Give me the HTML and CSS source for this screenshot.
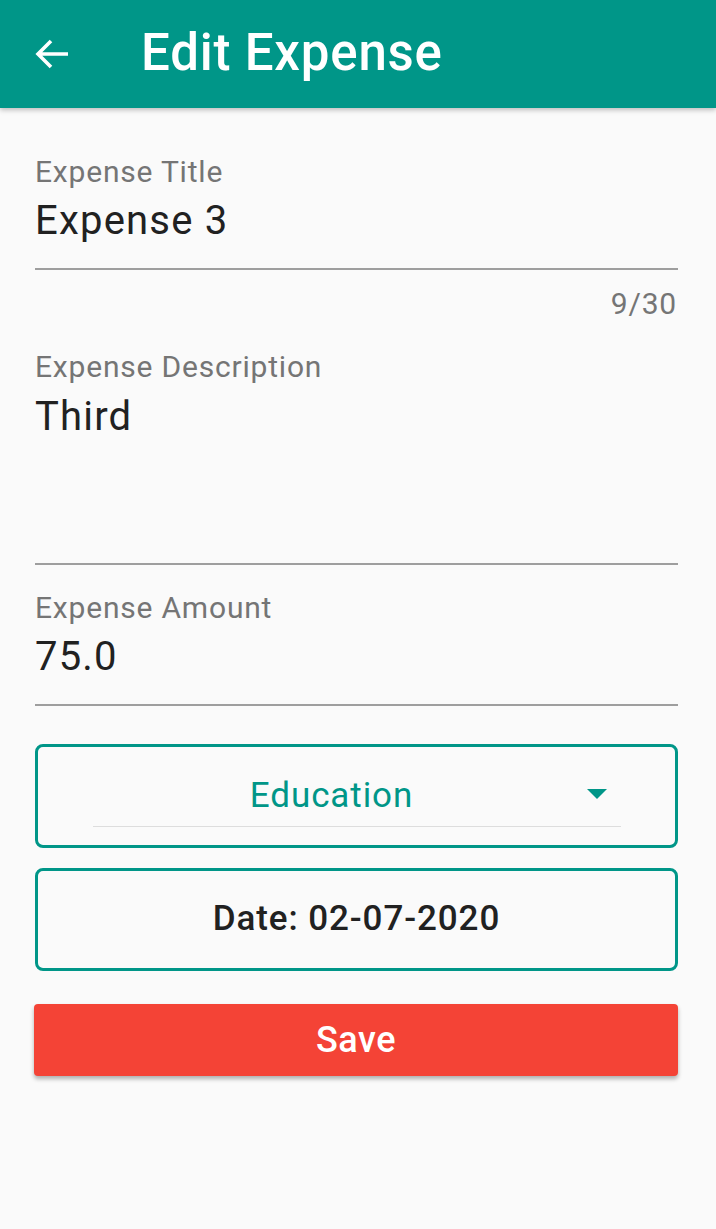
FILE: index.html
```html
<!DOCTYPE html>
<html>
<head>
<meta charset="utf-8">
<link rel="stylesheet" href="styles.css">
</head>
<body>
<header class="appbar">
  <svg class="back" width="36" height="36" viewBox="0 0 36 36"><path d="M34 18H4M17 5L4 18l13 13" fill="none" stroke="#fff" stroke-width="3.6" stroke-linecap="butt" stroke-linejoin="miter"/></svg>
  <h1 class="title">Edit Expense</h1>
</header>
<main class="content">
  <div class="field f-title">
    <div class="label">Expense Title</div>
    <div class="value">Expense 3</div>
  </div>
  <div class="counter">9/30</div>
  <div class="field f-desc">
    <div class="label">Expense Description</div>
    <div class="value">Third</div>
  </div>
  <div class="field f-amount">
    <div class="label">Expense Amount</div>
    <div class="value">75.0</div>
  </div>
  <div class="box dropdown">
    <div class="dd-inner">
      <span class="dd-text">Education</span>
      <svg class="dd-arrow" width="20" height="10" viewBox="0 0 20 10"><path d="M0 0h20L10 10z" fill="#009688"/></svg>
    </div>
  </div>
  <div class="box date">Date: 02-07-2020</div>
  <button class="save">Save</button>
</main>
</body>
</html>
```
FILE: styles.css
```css
* { box-sizing: border-box; }
html, body { margin: 0; padding: 0; }
body {
  width: 716px;
  height: 1229px;
  background: #fafafa;
  font-family: Roboto, "Noto Sans", sans-serif;
  overflow: hidden;
}
.appbar {
  height: 108px;
  background: #009688;
  display: flex;
  align-items: center;
  padding-left: 34px;
  box-shadow: 0 2px 5px rgba(0,0,0,0.25);
  position: relative;
}
.back { display: block; }
.title {
  margin: 0 0 0 71px;
  color: #fff;
  font-weight: 500;
  font-size: 51px;
  letter-spacing: 0.8px;
  line-height: 1;
  padding-bottom: 4px;
}
.content {
  padding: 0 38px 0 35px;
  display: flex;
  flex-direction: column;
}
.field {
  border-bottom: 2px solid #9e9e9e;
}
.label {
  color: #757575;
  font-size: 30px;
  letter-spacing: 0.8px;
  line-height: 34px;
  white-space: nowrap;
}
.value {
  color: #212121;
  font-size: 40px;
  letter-spacing: 1.2px;
  line-height: 46px;
  margin-top: 9px;
}
.f-title { padding-top: 47px; padding-bottom: 24px; }
.counter {
  text-align: right;
  color: #757575;
  font-size: 30px;
  letter-spacing: 0.8px;
  line-height: 34px;
  padding-top: 17px;
  margin-bottom: 29px;
  padding-right: 1px;
}
.f-desc { padding-bottom: 123px; }
.f-desc .value { margin-top: 10px; }
.f-amount { padding-top: 26px; padding-bottom: 24px; }
.box {
  border: 3px solid #009688;
  border-radius: 8px;
}
.dropdown {
  margin-top: 38px;
  height: 104px;
  display: flex;
  justify-content: center;
  padding-top: 18px;
}
.dd-inner {
  width: 528px;
  height: 62px;
  border-bottom: 1.5px solid #dddddd;
  display: flex;
  align-items: center;
  position: relative;
  justify-content: center;
}
.dd-text {
  color: #009688;
  font-size: 35px;
  letter-spacing: 0.9px;
  margin-left: -50px;
}
.dd-arrow { position: absolute; right: 14px; top: 24px; }
.date {
  margin-top: 20px;
  height: 103px;
  display: flex;
  align-items: center;
  justify-content: center;
  color: #212121;
  font-size: 35px;
  letter-spacing: 0.9px;
  font-weight: 500;
  padding-bottom: 2px;
}
.save {
  margin-top: 33px;
  margin-left: -1px;
  height: 72px;
  background: #f44336;
  border: none;
  border-radius: 4px;
  color: #fff;
  font-family: Roboto, "Noto Sans", sans-serif;
  font-size: 36px;
  letter-spacing: 0.5px;
  font-weight: 500;
  padding-bottom: 2px;
  box-shadow: 0 3px 4px rgba(0,0,0,0.3);
}
```
